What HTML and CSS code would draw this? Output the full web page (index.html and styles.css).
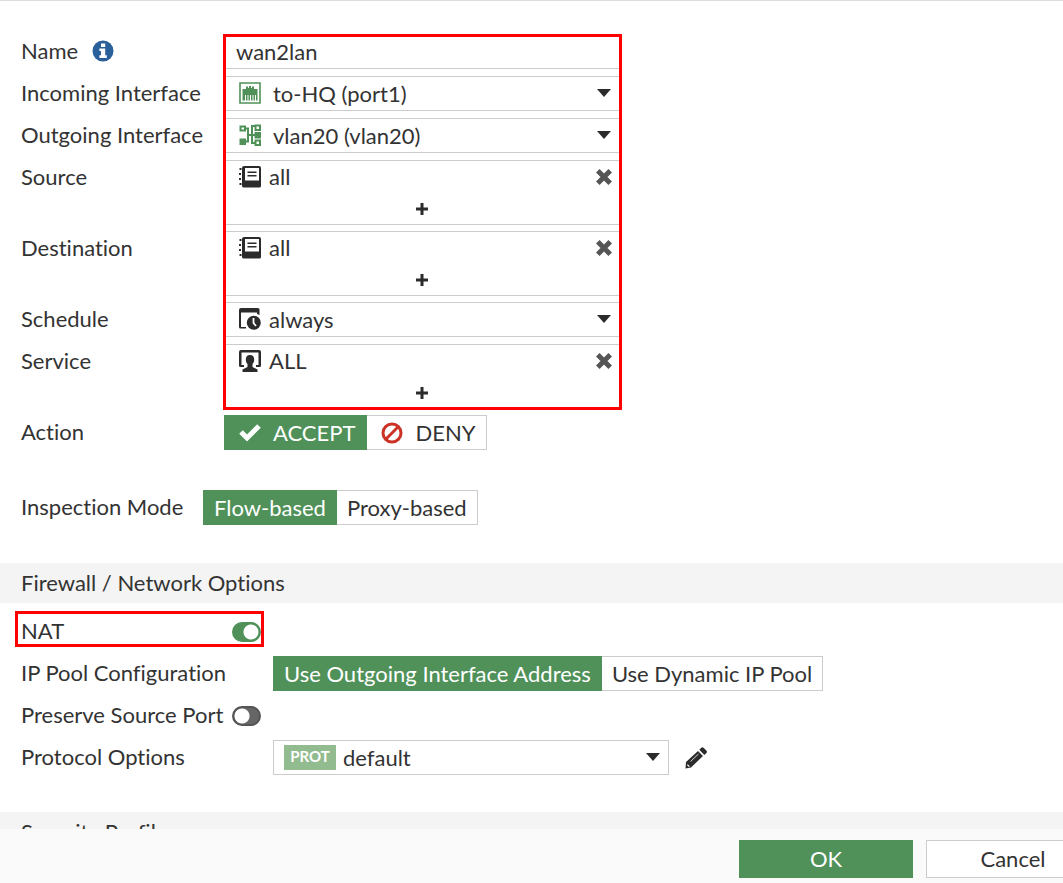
FILE: index.html
```html
<!DOCTYPE html>
<html lang="en">
<head>
    <meta charset="UTF-8">
    <meta name="viewport" content="width=device-width, initial-scale=1.0">
    <title>Edit Policy</title>
    <link rel="stylesheet" href="styles.css">
</head>
<body>
    <form class="policy">
        <div class="policy-body">
            <div class="rows rows-main highlight">
                <div class="row">
                    <label class="label" for="name">Name
                        <svg class="info" viewBox="0 0 22 22"><circle cx="11" cy="11" r="10.5" fill="#2a6099"/><path fill="#fff" d="M9 3.5h4.2v3.4H9zM7.4 8.5h5.8v6.8h1.6v2.6H7.4v-2.6H9v-4.2H7.4z"/></svg>
                    </label>
                    <input class="field" type="text" id="name" value="wan2lan">
                </div>
                <div class="row">
                    <label class="label" for="incoming">Incoming Interface</label>
                    <div class="select">
                        <svg class="icon" viewBox="0 0 22 22"><path fill="none" stroke="#4f9159" stroke-width="1.6" d="M1 1h20v20H1z"/><path fill="#4f9159" d="M3.500 7H7V4.500h2V6h1V4h2v2h1V4.500h2V7h3.500v11.500h-1.500V13h-1v5.500h-1.500V13h-1v5.500H12V13h-1v5.500H9.500V13h-1v5.500H7V13H6v5.500H3.500z"/></svg>
                        <select class="field" id="incoming"><option>to-HQ (port1)</option></select>
                        <svg class="caret" viewBox="0 0 14 8"><path d="M0 0h14L7 8z"/></svg>
                    </div>
                </div>
                <div class="row">
                    <label class="label" for="outgoing">Outgoing Interface</label>
                    <div class="select">
                        <svg class="icon" viewBox="0 0 22 22"><path fill="none" stroke="#4f9159" stroke-width="2" d="M1.500 2.500h4.500v4h-4.500zM16.500 1.500H21V6h-4.500zM16.500 16.500H21V21h-4.500zM6 4.500h3v13H6M9 11h8M16 2h-3v17h3"/><path fill="#4f9159" d="M.5 14.500h6.500v6.500H.5zM15.500 8h6.500v6.500h-6.500z"/></svg>
                        <select class="field" id="outgoing"><option>vlan20 (vlan20)</option></select>
                        <svg class="caret" viewBox="0 0 14 8"><path d="M0 0h14L7 8z"/></svg>
                    </div>
                </div>
                <div class="row">
                    <span class="label">Source</span>
                    <div class="multi">
                        <div class="entry">
                            <svg class="book" viewBox="0 0 22 22"><path fill="#2b2b2b" d="M5 0H20q2 0 2 2v18q0 1.500-1.500 1.500H5q-2 0-2-1.500V2Q3 0 5 0zM6 2v12.500h14V2z"/><path fill="#2b2b2b" d="M8.500 5.500h9V7h-9zM8.500 9h9v1.500h-9zM.5 2h2v2h-2zM0 7h2v2H0zM0 12h2v2H0zM.5 17h2v2h-2z"/></svg>
                            <span>all</span>
                            <button class="remove" type="button" aria-label="Remove"><svg viewBox="0 0 16 16"><path d="M1.800 1.800l12.400 12.400M14.200 1.800L1.800 14.200"/></svg></button>
                        </div>
                        <button class="add" type="button" aria-label="Add"><svg viewBox="0 0 12 12"><path d="M6 0v12M0 6h12"/></svg></button>
                    </div>
                </div>
                <div class="row">
                    <span class="label">Destination</span>
                    <div class="multi">
                        <div class="entry">
                            <svg class="book" viewBox="0 0 22 22"><path fill="#2b2b2b" d="M5 0H20q2 0 2 2v18q0 1.500-1.500 1.500H5q-2 0-2-1.500V2Q3 0 5 0zM6 2v12.500h14V2z"/><path fill="#2b2b2b" d="M8.500 5.500h9V7h-9zM8.500 9h9v1.500h-9zM.5 2h2v2h-2zM0 7h2v2H0zM0 12h2v2H0zM.5 17h2v2h-2z"/></svg>
                            <span>all</span>
                            <button class="remove" type="button" aria-label="Remove"><svg viewBox="0 0 16 16"><path d="M1.800 1.800l12.400 12.400M14.200 1.800L1.800 14.200"/></svg></button>
                        </div>
                        <button class="add" type="button" aria-label="Add"><svg viewBox="0 0 12 12"><path d="M6 0v12M0 6h12"/></svg></button>
                    </div>
                </div>
                <div class="row">
                    <label class="label" for="schedule">Schedule</label>
                    <div class="select">
                        <svg class="icon" viewBox="0 0 22 22"><path fill="#2b2b2b" d="M2 0h17q1.500 0 1.500 1.500V7L18 6V4.500H2V19h5v1.500H1.500Q0 20.500 0 19V2Q0 0 2 0z"/><circle cx="14.800" cy="14.800" r="7" fill="#2b2b2b"/><path fill="none" stroke="#fff" stroke-width="1.800" d="M14.500 10v5l2.500 3"/></svg>
                        <select class="field near" id="schedule"><option>always</option></select>
                        <svg class="caret" viewBox="0 0 14 8"><path d="M0 0h14L7 8z"/></svg>
                    </div>
                </div>
                <div class="row">
                    <span class="label">Service</span>
                    <div class="multi">
                        <div class="entry">
                            <svg class="book" viewBox="0 0 22 22"><path fill="#2b2b2b" d="M2 0h18q2 0 2 2v13.500q0 1.500-1.500 1.500H17v-2h2.500V2.500h-17V15H5v2H1.500Q0 17 0 15.500V2Q0 0 2 0z"/><path fill="#2b2b2b" d="M11 5c3 0 4.200 2 4.200 4.500 0 2-.8 3.500-1.700 4.500v3l5 2.500V22h-15v-2.500l5-2.500v-3c-.9-1-1.700-2.500-1.700-4.500C6.800 7 8 5 11 5z"/></svg>
                            <span>ALL</span>
                            <button class="remove" type="button" aria-label="Remove"><svg viewBox="0 0 16 16"><path d="M1.800 1.800l12.400 12.400M14.200 1.800L1.800 14.200"/></svg></button>
                        </div>
                        <button class="add" type="button" aria-label="Add"><svg viewBox="0 0 12 12"><path d="M6 0v12M0 6h12"/></svg></button>
                    </div>
                </div>
            </div>

            <div class="rows rows-main action">
                <div class="row">
                    <span class="label">Action</span>
                    <div class="segmented">
                        <label><input type="radio" name="action" checked>
                            <svg viewBox="0 0 22 22"><path fill="none" stroke="#fff" stroke-width="5" d="M2 10l6 6L20 4"/></svg>
                            <span>ACCEPT</span></label>
                        <label><input type="radio" name="action">
                            <svg viewBox="0 0 22 22"><g fill="none" stroke="#cc3226" stroke-width="3"><circle cx="11" cy="11" r="9"/><path d="M4.800 17.200L17.200 4.800"/></g></svg>
                            <span>DENY</span></label>
                    </div>
                </div>
            </div>

            <div class="rows rows-mode">
                <div class="row">
                    <span class="label">Inspection Mode</span>
                    <div class="segmented">
                        <label><input type="radio" name="mode" checked><span>Flow-based</span></label>
                        <label><input type="radio" name="mode"><span>Proxy-based</span></label>
                    </div>
                </div>
            </div>

            <h2 class="section">Firewall / Network Options</h2>
            <div class="rows rows-nat">
                <div class="row nat">
                    <label class="label" for="nat">NAT</label>
                    <input class="toggle" type="checkbox" id="nat" checked>
                </div>
                <div class="row">
                    <span class="label">IP Pool Configuration</span>
                    <div class="segmented">
                        <label><input type="radio" name="pool" checked><span>Use Outgoing Interface Address</span></label>
                        <label><input type="radio" name="pool"><span>Use Dynamic IP Pool</span></label>
                    </div>
                </div>
                <div class="row">
                    <label class="label" for="port">Preserve Source Port</label>
                    <input class="toggle" type="checkbox" id="port">
                </div>
                <div class="row">
                    <label class="label" for="protocol">Protocol Options</label>
                    <div class="select">
                        <span class="badge">PROT</span>
                        <select class="field" id="protocol"><option>default</option></select>
                        <svg class="caret" viewBox="0 0 14 8"><path d="M0 0h14L7 8z"/></svg>
                    </div>
                    <button class="edit" type="button" aria-label="Edit"><svg viewBox="0 0 22 22"><path fill="#2b2b2b" d="M1 15L13 4l5 5L6 20.500l-5.500 1zM14.300 2.800l2-2q1.200-1 2.500.2l2.500 2.500q1.200 1.200.2 2.400l-2.200 2z"/><path fill="none" stroke="#fff" stroke-width="0.800" d="M5.500 14.500l8-7.500"/><path fill="#fff" d="M2.500 17l2.500 2.500-1.500.3-1.200-1.200z"/></svg></button>
                </div>
            </div>

            <h2 class="section">Security Profiles</h2>
        </div>
        <div class="footer">
            <button class="btn btn-ok" type="submit">OK</button>
            <button class="btn btn-cancel" type="button">Cancel</button>
        </div>
    </form>
</body>
</html>
```
FILE: styles.css
```css
*, ::after {
    box-sizing: border-box;
}
body {
    margin: 0;
    font-family: Lato, sans-serif;
    font-size: 22px;
    font-variant-ligatures: none;
    line-height: 34px;
    color: #333;
    background: #fff;
}
input, select, button {
    font: inherit;
    font-variant-ligatures: none;
    color: inherit;
    margin: 0;
}
button {
    padding: 0;
    border: none;
    background: none;
    cursor: pointer;
}
svg {
    display: block;
    flex: none;
}
.policy {
    display: flex;
    flex-direction: column;
    height: 100vh;
    border-top: 1px solid #ddd;
}
.policy-body {
    flex: 1;
    min-height: 0;
    overflow: hidden;
    padding-top: 33px;
}

/* Form rows */
.rows {
    display: flex;
    flex-direction: column;
    gap: 7px;
    padding-left: 21px;
}
.row {
    display: flex;
    min-height: 35px;
}
.label {
    display: flex;
    align-items: center;
    flex: none;
    height: 33px;
}
.rows-main .label {
    width: 203px;
}
.rows-mode .label {
    width: 182px;
}
.rows-nat .label {
    width: 252px;
}
.info {
    width: 22px;
    height: 22px;
    margin-left: 14px;
}
.action {
    padding-top: 7px;
    padding-bottom: 40px;
}
.rows-mode {
    padding-bottom: 38px;
}
.rows-nat {
    padding-top: 11px;
    padding-bottom: 37px;
}

/* Red marker frames */
.highlight {
    position: relative;
}
.highlight::after {
    content: "";
    position: absolute;
    top: 0;
    bottom: -2px;
    left: 223px;
    width: 399px;
    border: 3px solid #fe0000;
    pointer-events: none;
}
.nat {
    position: relative;
}
.nat::after {
    content: "";
    position: absolute;
    top: -3px;
    bottom: 2px;
    left: -6px;
    width: 249px;
    border: 3px solid #fe0000;
    pointer-events: none;
}

/* Fields */
.field {
    width: 396px;
    height: 35px;
    padding: 0 11px;
    border: 1px solid #ccc;
    border-radius: 0;
    background: #fff;
    appearance: none;
    outline: none;
}
.select {
    position: relative;
}
.select .field {
    display: block;
    padding-left: 48px;
}
.select .near {
    padding-left: 44px;
}
.icon {
    position: absolute;
    top: 6px;
    left: 15px;
    width: 22px;
    height: 22px;
}
.caret {
    position: absolute;
    top: 13px;
    right: 9px;
    width: 14px;
    height: 8px;
    fill: #2b2b2b;
    pointer-events: none;
}
.multi {
    width: 396px;
    height: 65px;
    margin-bottom: -1px;
    border: 1px solid #ccc;
}
.entry {
    display: flex;
    align-items: center;
    gap: 8px;
    height: 32px;
    padding: 0 7px 0 14px;
}
.book {
    width: 22px;
    height: 22px;
}
.remove {
    margin-left: auto;
}
.remove svg {
    width: 16px;
    height: 16px;
    stroke: #555;
    stroke-width: 5;
}
.add {
    display: flex;
    align-items: center;
    justify-content: center;
    width: 100%;
    height: 31px;
}
.add svg {
    width: 12px;
    height: 12px;
    stroke: #2b2b2b;
    stroke-width: 3;
}

/* Button groups */
.segmented {
    display: flex;
}
.segmented label {
    display: flex;
    align-items: center;
    gap: 12px;
    height: 35px;
    padding: 0 11px;
    border: 1px solid #ccc;
    border-left: none;
    line-height: 32px;
    cursor: pointer;
}
.segmented label:has(:checked) {
    padding-left: 11px;
    border-left: 1px solid;
    border-color: #4f9159;
    background: #4f9159;
    color: #fff;
}
.rows-mode .segmented label, .rows-nat .segmented label {
    padding: 0 10px;
}
.segmented input {
    position: absolute;
    opacity: 0;
    pointer-events: none;
}
.segmented svg {
    width: 22px;
    height: 22px;
    margin-left: 3px;
}

/* Switches */
.rows-nat .label:has(+ .toggle) {
    width: 211px;
}
.toggle {
    align-self: center;
    width: 29px;
    height: 20px;
    border: 2px solid #555;
    border-radius: 10px;
    background: radial-gradient(circle at 8px 8px, #fff 7px, #666 8px);
    appearance: none;
}
.toggle:checked {
    border-color: #4f9159;
    background: radial-gradient(circle at 17px 8px, #fff 7px, #4f9159 8px);
}

.badge {
    position: absolute;
    top: 5px;
    left: 11px;
    width: 52px;
    height: 25px;
    background: #93bb90;
    color: #fff;
    font-size: 15px;
    font-weight: bold;
    line-height: 23px;
    text-align: center;
    pointer-events: none;
}
.select .badge + .field {
    padding-left: 69px;
}
.edit {
    margin-left: 16px;
}
.edit svg {
    width: 22px;
    height: 22px;
}

.section {
    margin: 0;
    padding-left: 21px;
    background: #f4f4f4;
    font-size: 22px;
    font-weight: normal;
    line-height: 40px;
}

/* Footer */
.footer {
    display: flex;
    flex: none;
    justify-content: flex-end;
    gap: 13px;
    padding: 11px 0 5px;
    background: #fafafa;
    overflow: hidden;
}
.btn {
    flex: none;
    width: 174px;
    height: 38px;
    border: 1px solid #ccc;
    background: #fff;
}
.btn-ok {
    border-color: #4f9159;
    background: #4f9159;
    color: #fff;
}
.btn-cancel {
    margin-right: -37px;
}
```
